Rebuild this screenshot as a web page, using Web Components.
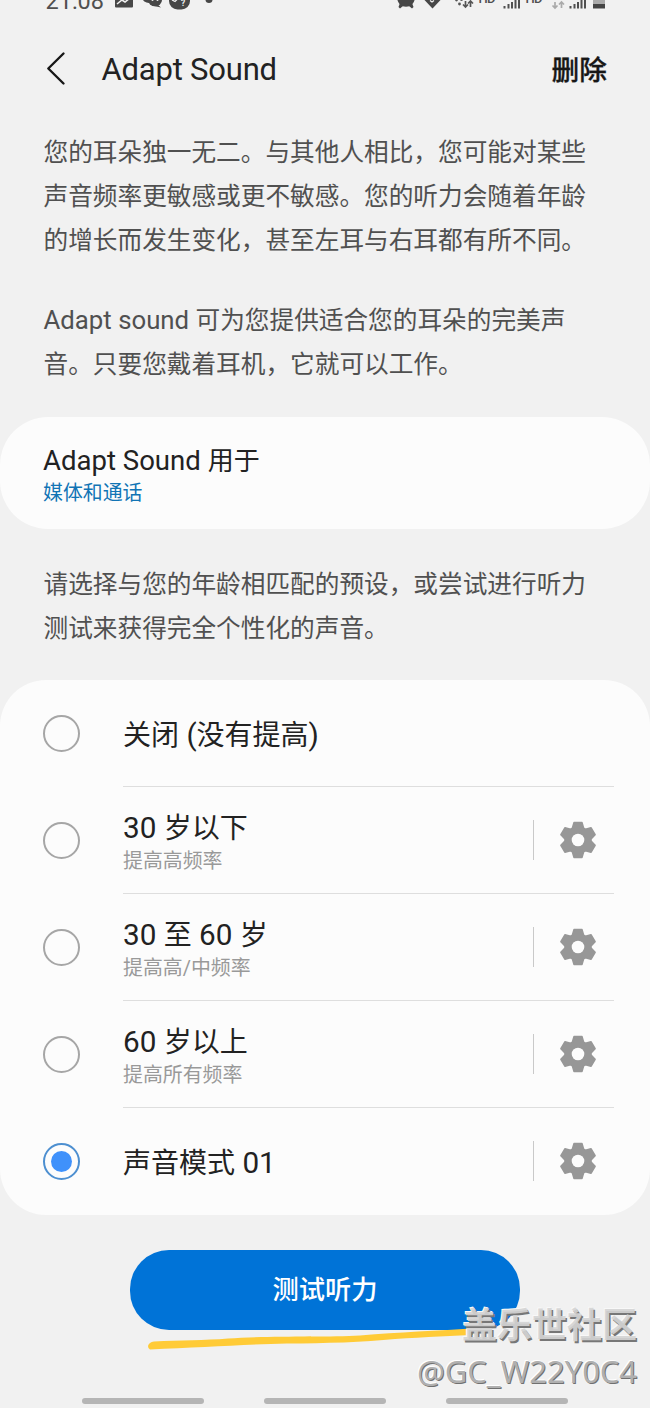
<!DOCTYPE html>
<html lang="zh-CN">
<head>
<meta charset="utf-8">
<title>Adapt Sound</title>
<style>
    body {
        margin: 0;
        background: #f1f1f1;
        color: #222;
        font-family: Roboto, "Noto Sans CJK SC", sans-serif;
    }
</style>
</head>
<body>
<adapt-sound-page></adapt-sound-page>

<script>
const define = (name, html, setup) => {
    const template = document.createElement('template');
    template.innerHTML = html;
    customElements.define(name, class extends HTMLElement {
        constructor() {
            super();
            this.attachShadow({ mode: 'open' });
            this.shadowRoot.appendChild(template.content.cloneNode(true));
        }

        connectedCallback() {
            if (setup) setup(this, this.shadowRoot);
        }
    });
};

// status bar, scrolled half out of the top edge
define('status-bar', `
    <style>
        :host { display: block; height: 14px; overflow: hidden; }
        svg { display: block; }
        text { font-family: Roboto, sans-serif; fill: #505050; }
    </style>
    <svg width="650" height="14" viewBox="0 0 650 14">
        <text x="45.500" y="8.800" font-size="23.500" textLength="58.500">21:08</text>
        <g fill="#474747">
            <path d="M115 -8h18v14.500q0 1-1 1h-16q-1 0-1-1z"/>
            <ellipse cx="149" cy="-2" rx="6.500" ry="5"/>
            <ellipse cx="155" cy="0" rx="7" ry="6.300"/>
            <path d="M157 4l4 3.500-7-1.500z"/>
            <rect x="169" y="-11" width="21" height="20.500" rx="8.500"/>
            <circle cx="209" cy="-.500" r="3.500"/>
            <circle cx="406" cy="-2" r="8.800"/>
            <path d="M400 3l3 3-3 2.500-1.500-1.500zM412 3l-3 3 3 2.500 1.500-1.500z"/>
            <path d="M424.500 0l1-6h14l1 6-8 8.500z"/>
        </g>
        <path d="M117 4l5-4 3 2 5-4" stroke="#f1f1f1" stroke-width="1.600" fill="none"/>
        <g fill="#f1f1f1"><circle cx="152.500" cy="0" r="1"/><circle cx="157.500" cy="0" r="1"/></g>
        <path d="M172 0l3 1.500 2-2M430 .500l2 1.500 2-1.500" stroke="#f1f1f1" stroke-width="1.300" fill="none"/>
        <text x="181" y="6" style="font-size:8.500px;fill:#f1f1f1;font-weight:700">?</text>
        <g fill="#555"><circle cx="456.500" cy="0" r="1.400"/><circle cx="459.500" cy="4" r="1.400"/><circle cx="461.500" cy="-.500" r="1.400"/></g>
        <path d="M465.500 1v6M463 4.500l2.500 2.500 2.500-2.500M470.500 7V1M468 3.500l2.500-2.500 2.500 2.500" stroke="#555" stroke-width="1.700" fill="none"/>
        <path d="M555 2v6M552.500 5.500l2.500 2.500 2.500-2.500M561.500 8V2M559 4.500l2.500-2.500 2.500 2.500" stroke="#aaa" stroke-width="1.700" fill="none"/>
        <text x="478.500" y="3.300" font-size="13" textLength="17" style="font-weight:500">HD</text>
        <text x="525.500" y="3.300" font-size="13" textLength="17" style="font-weight:500">HD</text>
        <path d="M504.500 6v2.500M508.500 4v4.500M512 2v6.500M515.500 0v8.500M519 -2v10.500M570.500 6v2.500M574.500 4v4.500M578 2v6.500M581.500 0v8.500M585 -2v10.500" stroke="#505050" stroke-width="2"/>
        <path d="M593 -6h12V4h-12z" fill="#aaa"/>
        <path d="M593 4h12v4.500h-12z" fill="#444"/>
    </svg>
`);

define('title-bar', `
    <style>
        :host { display: flex; align-items: center; height: 112px; box-sizing: border-box; padding: 0 43px 3px 46px; }
        h1 { flex: 1; margin: 2px 0 0 35.500px; font-size: 31px; font-weight: 400; letter-spacing: -.2px; color: #222; }
        button { border: 0; padding: 0 0 2px; background: none; font: 500 27.700px Roboto, "Noto Sans CJK SC", sans-serif; color: #171717; -webkit-text-stroke: .3px #171717; }
    </style>
    <svg width="20" height="36" viewBox="0 0 20 36">
        <path d="M17.500 2.500L2.300 17.500l15.200 15" fill="none" stroke="#171717" stroke-width="2.400" stroke-linecap="round" stroke-linejoin="round"/>
    </svg>
    <h1><slot></slot></h1>
    <button><slot name="action"></slot></button>
`);

define('body-copy', `
    <style>
        :host { display: block; padding: 0 43.500px; font-size: 24.670px; line-height: 44px; color: #505050; white-space: nowrap; }
    </style>
    <slot></slot>
`);

define('setting-card', `
    <style>
        :host { display: block; box-sizing: border-box; height: 112px; padding: 27px 43px 0; border-radius: 48px; background: #fcfcfc; }
        .title { font-size: 26px; line-height: 34px; }
        .value { font-size: 19.900px; line-height: 31px; color: #1174b5; }
    </style>
    <div class="title"><slot></slot></div>
    <div class="value"><slot name="value"></slot></div>
`);

define('gear-icon', `
    <style>
        :host { display: block; width: 38px; height: 38px; }
        svg { display: block; }
    </style>
    <svg width="38" height="38" viewBox="-19 -19 38 38">
        <path fill="#979797" stroke="#979797" stroke-width="1.600" stroke-linejoin="round"/>
        <circle r="6.300" fill="#fcfcfc"/>
    </svg>
`, (host, root) => {
    const tooth = [[-5.6, -11.8], [-4, -17.4], [4, -17.4], [5.6, -11.8]];
    const points = [];
    for (let i = 0; i < 6; i++) {
        const a = (i * Math.PI) / 3;
        tooth.forEach(([x, y]) => {
            points.push([x * Math.cos(a) - y * Math.sin(a), x * Math.sin(a) + y * Math.cos(a)].map((n) => n.toFixed(2)));
        });
    }
    root.querySelector('path').setAttribute('d', `M${points.join('L')}Z`);
});

define('preset-row', `
    <style>
        :host { display: flex; height: 107px; box-sizing: border-box; padding: 0 36px 0 43px; align-items: stretch; }
        .radio { align-self: center; width: 37px; height: 37px; box-sizing: border-box; border: 2px solid #a6a6a6; border-radius: 50%; display: grid; place-items: center; margin-right: 43px; }
        :host([checked]) .radio { border-color: #4d8fd0; }
        :host([checked]) .radio::after { content: ""; width: 21px; height: 21px; border-radius: 50%; background: #3f91fb; }
        .content { flex: 1; display: flex; align-items: center; border-bottom: 1px solid #dedede; }
        :host(:last-of-type) .content { border-color: transparent; }
        .text { flex: 1; padding-top: 5px; }
        :host([note]) .text { padding-top: 7px; }
        .title { font-size: 28px; line-height: 36px; }
        .note { font-size: 19.900px; line-height: 30px; color: #999; }
        .settings { display: flex; align-items: center; gap: 25px; padding-right: 17px; }
        .settings::before { content: ""; width: 1px; height: 40px; background: #c9c9c9; }
        :host([plain]) .settings { display: none; }
    </style>
    <div class="radio"></div>
    <div class="content">
        <div class="text">
            <div class="title"><slot></slot></div>
            <div class="note"></div>
        </div>
        <div class="settings"><gear-icon></gear-icon></div>
    </div>
`, (host, root) => {
    const note = root.querySelector('.note');
    if (host.hasAttribute('note')) {
        note.textContent = host.getAttribute('note');
    } else {
        note.remove();
    }
});

define('preset-list', `
    <style>
        :host { display: block; border-radius: 46px; background: #fcfcfc; }
    </style>
    <slot></slot>
`);

define('test-button', `
    <style>
        :host { display: block; position: relative; width: 390px; height: 80px; margin: 0 auto; }
        button { width: 100%; height: 100%; border: 0; border-radius: 39px; padding: 0 0 5px; background: #0073d7; color: #fff; font: 500 26.300px Roboto, "Noto Sans CJK SC", sans-serif; }
        /* marker stroke under the button */
        svg { position: absolute; left: 15px; top: 72px; }
    </style>
    <button><slot></slot></button>
    <svg width="345" height="32" viewBox="0 0 345 32">
        <path d="M3 24Q4 20 9 19.500C35 18 60 18.500 83 16.500C120 13.500 180 15.500 215 13.500C255 10 290 9 334 6V12.500C310 14 280 15 250 17C220 20 180 21.500 142 21.500C100 22.500 55 25.500 5 27.500Q3 27 3 24z" fill="#ffcb37"/>
    </svg>
`);

define('nav-hints', `
    <style>
        :host { display: flex; justify-content: center; gap: 60px; }
        i { width: 122px; height: 6px; border-radius: 3px; background: #b5b5b5; }
    </style>
    <i></i><i></i><i></i>
`);

define('water-mark', `
    <style>
        :host { position: absolute; right: 13px; top: 1298px; text-align: right; white-space: nowrap; }
        .site { font: 700 35px/50px "Noto Sans CJK SC", sans-serif; color: rgba(212, 212, 212, .92); text-shadow: 1.500px 1.500px 0 #777, -1px -1px 0 #f8f8f8; }
        .user { font: 400 30.900px/46px "Noto Sans", "Open Sans", sans-serif; color: #b0b0b0; text-shadow: 1px 1px 0 #707070, -1px -1px 0 #fff; }
    </style>
    <div class="site"><slot name="site"></slot></div>
    <div class="user"><slot name="user"></slot></div>
`);

define('adapt-sound-page', `
    <style>
        :host { display: block; position: relative; width: 650px; height: 1408px; overflow: hidden; }
        /* latin runs are set slightly larger than the hanzi beside them */
        .en { font-size: 1.06em; line-height: 1; }
        .intro { margin-top: 5px; }
        .second { margin-top: 36px; }
        .second .en { font-size: 1.045em; }
        setting-card { margin-top: 30px; }
        .hint { margin-top: 34px; }
        preset-list { margin-top: 29px; }
        test-button { margin-top: 35px; }
        nav-hints { margin-top: 68px; }
    </style>
    <status-bar></status-bar>
    <title-bar>Adapt Sound<span slot="action">删除</span></title-bar>
    <body-copy class="intro">您的耳朵独一无二。与其他人相比，您可能对某些<br>声音频率更敏感或更不敏感。您的听力会随着年龄<br>的增长而发生变化，甚至左耳与右耳都有所不同。</body-copy>
    <body-copy class="second"><span class="en">Adapt sound </span>可为您提供适合您的耳朵的完美声<br>音。只要您戴着耳机，它就可以工作。</body-copy>
    <setting-card><span class="en">Adapt Sound </span>用于<span slot="value">媒体和通话</span></setting-card>
    <body-copy class="hint">请选择与您的年龄相匹配的预设，或尝试进行听力<br>测试来获得完全个性化的声音。</body-copy>
    <preset-list>
        <preset-row plain>关闭<span class="en"> (</span>没有提高<span class="en">)</span></preset-row>
        <preset-row note="提高高频率"><span class="en">30 </span>岁以下</preset-row>
        <preset-row note="提高高/中频率"><span class="en">30 </span>至<span class="en"> 60 </span>岁</preset-row>
        <preset-row note="提高所有频率"><span class="en">60 </span>岁以上</preset-row>
        <preset-row checked>声音模式<span class="en"> 01</span></preset-row>
    </preset-list>
    <test-button>测试听力</test-button>
    <nav-hints></nav-hints>
    <water-mark><span slot="site">盖乐世社区</span><span slot="user">@GC_W22Y0C4</span></water-mark>
`);
</script>
</body>
</html>
